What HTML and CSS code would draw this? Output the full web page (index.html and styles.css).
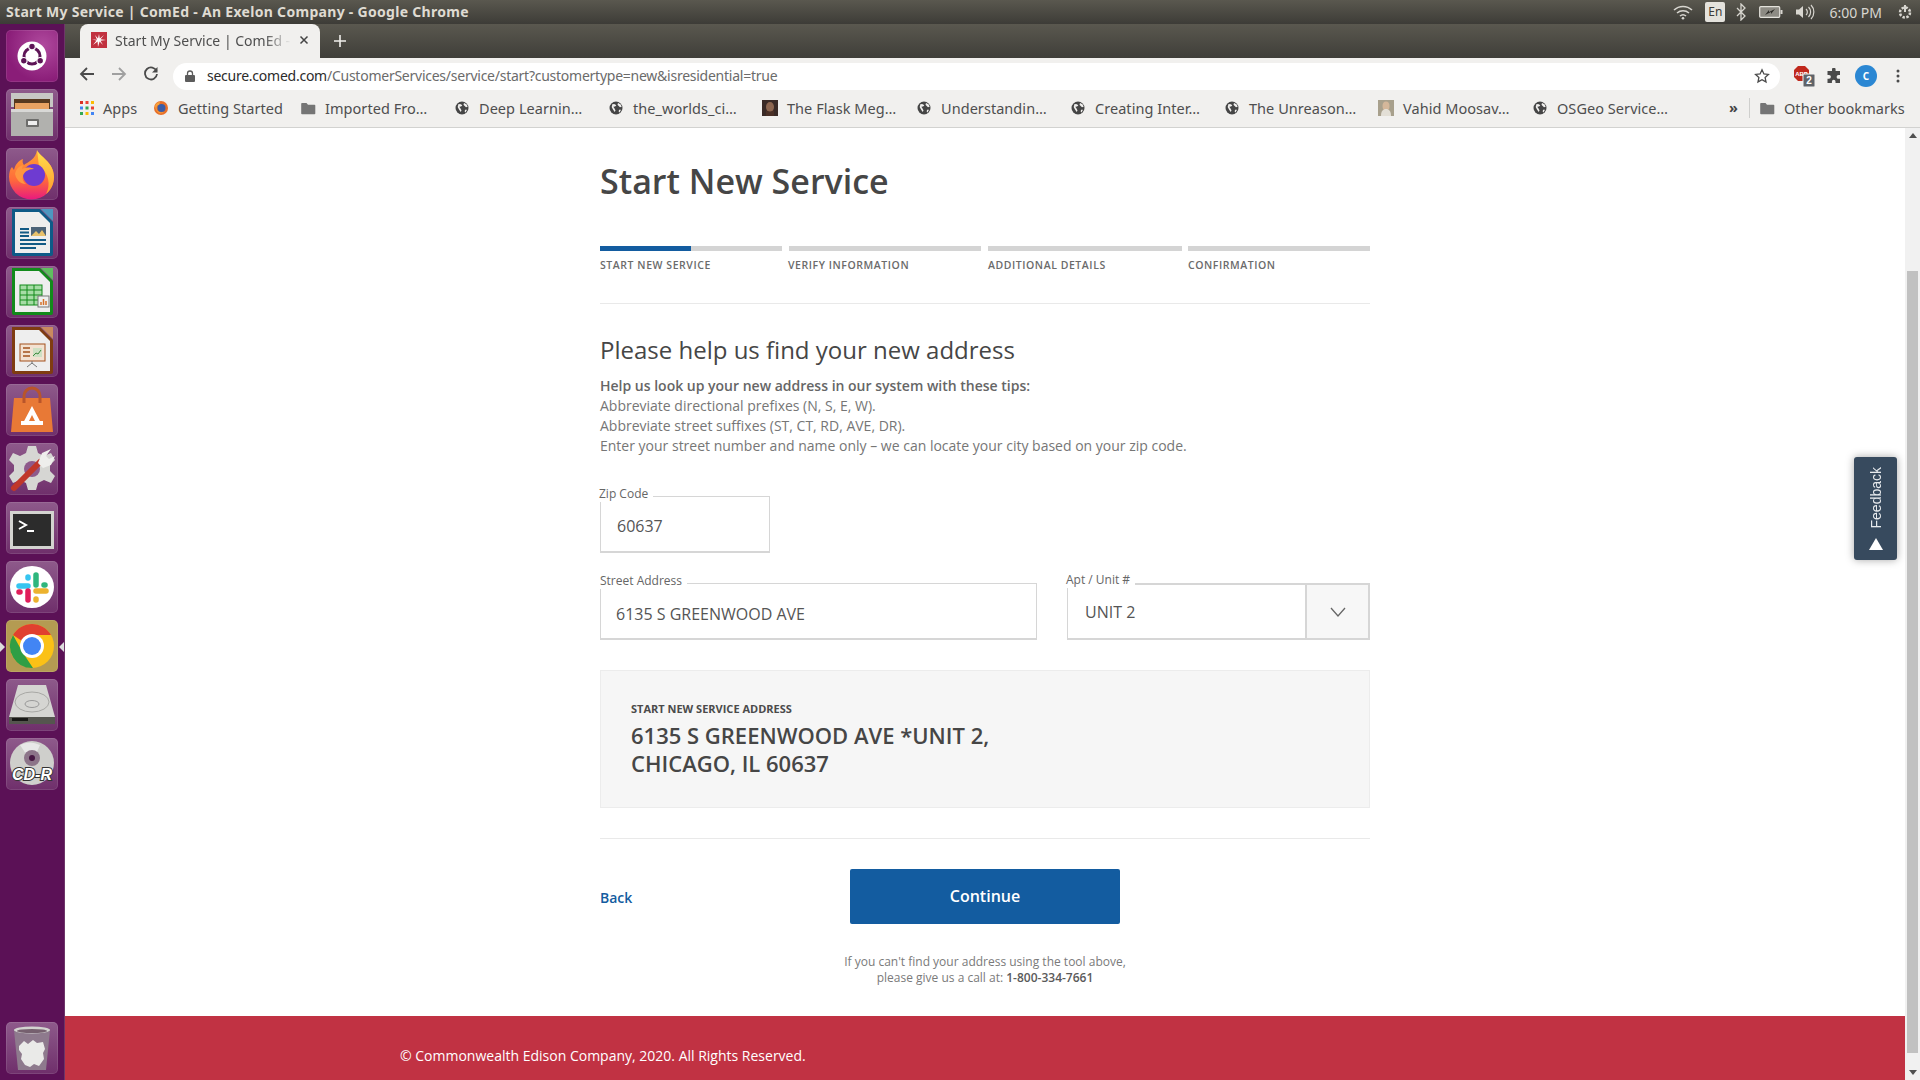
FILE: index.html
```html
<!doctype html>
<html>
<head>
<meta charset="utf-8">
<title>Start My Service | ComEd - An Exelon Company</title>
<link rel="stylesheet" href="styles.css">
</head>
<body>
<svg class="defs" width="0" height="0">
	<defs>
		<linearGradient id="fox" x1="0" y1="0" x2="0" y2="1">
			<stop offset="0" stop-color="#ffa436"/>
			<stop offset=".6" stop-color="#ff6a3a"/>
			<stop offset="1" stop-color="#e8197f"/>
		</linearGradient>
		<linearGradient id="foxtop" x1="0" y1="0" x2="0" y2="1">
			<stop offset="0" stop-color="#ffe14d"/>
			<stop offset="1" stop-color="#ff9a2e"/>
		</linearGradient>
	</defs>
	<symbol id="globe" viewBox="0 0 16 16">
		<circle cx="8" cy="8" r="6.500" fill="#454545"/>
		<path d="M4.500 4l2.500.3 1.300 1.200-1.300.9-1.700.4 1.200 1.600 1 2-.8 1.600-1.700-2.500-1.300-2.500zM10 3l2.500 1.300 1.200 2.500-1.700.4-1.300-1.200-1.200-1.300zM11 9.800h2l-1.500 2.700-.8-.8z" fill="#f1f0ee"/>
	</symbol>
	<symbol id="folder" viewBox="0 0 16 16">
		<path d="M1.500 3h5l1.500 1.700h6.500a.8.800 0 0 1 .8.800v8a.8.800 0 0 1-.8.800h-12.500a.8.800 0 0 1-.8-.8v-9.700a.8.800 0 0 1 .8-.8z" fill="#757575"/>
	</symbol>
</svg>

<div class="topbar">
	<div class="topbar-title">Start My Service | ComEd - An Exelon Company - Google Chrome</div>
	<div class="tray">
		<svg width="20" height="16" viewBox="0 0 20 16"><path d="M1 6a13 13 0 0 1 18 0M4 9a9 9 0 0 1 12 0M7 12a4.500 4.500 0 0 1 6 0" fill="none" stroke="#d8d6d0" stroke-width="1.500"/><circle cx="10" cy="14.200" r="1.300" fill="#d8d6d0"/></svg>
		<span class="tray-lang">En</span>
		<svg class="tray-bt" width="10" height="18" viewBox="0 0 10 18"><path d="M1 5l8 8-4 4V1l4 4-8 8" fill="none" stroke="#d8d6d0" stroke-width="1.300"/></svg>
		<svg class="tray-batt" width="24" height="14" viewBox="0 0 24 14"><rect x=".7" y="1.700" width="20" height="10.600" rx="1" fill="#8d8b84" stroke="#e4e2dc" stroke-width="1.200"/><rect x="21.500" y="5" width="2" height="4" fill="#d8d6d0"/><path d="M6 10l6-3v2l4-5-6 3V5z" fill="#2f2e2a"/></svg>
		<svg class="tray-vol" width="20" height="16" viewBox="0 0 20 16"><path d="M1 5.500h3l4-3.500v12l-4-3.500H1z" fill="#d8d6d0"/><path d="M11 5a4 4 0 0 1 0 6M13.500 3a7 7 0 0 1 0 10M16 1a10 10 0 0 1 0 14" fill="none" stroke="#d8d6d0" stroke-width="1.200"/></svg>
		<span class="tray-clock">6:00 PM</span>
		<svg width="18" height="18" viewBox="0 0 18 18"><g fill="none" stroke="#d8d6d0"><circle cx="9" cy="9.500" r="5" stroke-width="2.500" stroke-dasharray="2.400 1.500"/><path d="M9 2v7" stroke-width="2"/></g></svg>
	</div>
</div>

<div class="desktop">
	<nav class="launcher">
		<div class="tile tile-bfb">
			<svg viewBox="0 0 52 52"><circle cx="26" cy="26" r="14.500" fill="#fff"/><circle cx="26" cy="26" r="8" fill="none" stroke="#5e1557" stroke-width="3"/><g fill="#5e1557" stroke="#fff" stroke-width="1.200"><circle cx="26" cy="16.500" r="3.300"/><circle cx="17.800" cy="30.800" r="3.300"/><circle cx="34.200" cy="30.800" r="3.300"/></g></svg>
		</div>
		<div class="tile">
			<svg viewBox="0 0 52 52"><path d="M5 4h42v14H5z" fill="#c7c7c4"/><path d="M8 10h36v12H8z" fill="#57391f"/><path d="M9 14h34v8H9z" fill="#e8a262"/><path d="M5 20h42v27H5z" fill="#b1b1ae"/><path d="M5 20h42v3H5z" fill="#d8d8d6"/><rect x="20" y="30" width="13" height="8" rx="1" fill="#6d6d6b"/><rect x="22" y="32" width="9" height="4" fill="#eee"/></svg>
		</div>
		<div class="tile">
			<svg viewBox="0 0 52 52"><path d="M31 2c2 6 17 12 17 27a22 22 0 0 1-45 0c0-4 1-8 3-10l2 3c1-5 4-9 9-11-1 3 0 5 1 6 4-3 12-6 13-15z" fill="url(#fox)"/><path d="M31 2c2 6 17 12 17 27 0 7-3 13-8 17 5-9 3-21-7-28-1-5-1-11-2-16z" fill="url(#foxtop)"/><circle cx="28" cy="27" r="11" fill="#6e3bd1"/><path d="M9 26c1-5 4-8 8-9l-1 4c4-2 9-2 12 0-6 0-10 3-11 7-1 3 0 6 3 8-6 0-10-5-11-10z" fill="#ff9640"/></svg>
		</div>
		<div class="tile">
			<svg viewBox="0 0 52 52"><path d="M6 2h28l13 13v32a2 2 0 0 1-2 2H8a2 2 0 0 1-2-2z" fill="#0e5a87"/><path d="M9 5h24l11 11v30H9z" fill="#eee"/><path d="M35 2h12v12z" fill="#4d97c0"/><rect x="25" y="20" width="15" height="9" fill="#4c6378"/><path d="M25 29l5-5 3 3 3-4 4 6z" fill="#e8c16b"/><path d="M14 22h9M14 25.500h9M14 29h9M14 33h26M14 37h26M14 41h16" stroke="#125a85" stroke-width="2"/></svg>
		</div>
		<div class="tile">
			<svg viewBox="0 0 52 52"><path d="M6 2h28l13 13v32a2 2 0 0 1-2 2H8a2 2 0 0 1-2-2z" fill="#128a1b"/><path d="M9 5h24l11 11v30H9z" fill="#eee"/><path d="M35 2h12v12z" fill="#5fbf5f"/><rect x="14" y="19" width="22" height="20" fill="#a6dca6" stroke="#128a1b"/><path d="M14 24h22M14 29h22M14 34h22M21 19v20M28 19v20" stroke="#128a1b"/><rect x="32" y="30" width="11" height="11" fill="#eee" stroke="#777"/><path d="M35 39v-3M37.500 39v-6M40 39v-4" stroke="#d5712b" stroke-width="1.500"/></svg>
		</div>
		<div class="tile">
			<svg viewBox="0 0 52 52"><path d="M6 2h28l13 13v32a2 2 0 0 1-2 2H8a2 2 0 0 1-2-2z" fill="#7f3c12"/><path d="M9 5h24l11 11v30H9z" fill="#eee"/><path d="M35 2h12v12z" fill="#c98a5f"/><rect x="14" y="19" width="25" height="17" fill="#f3e2d2" stroke="#a3511d"/><path d="M17 23h7M17 27h7M17 31h7" stroke="#a3511d" stroke-width="1.500"/><rect x="27" y="23" width="9" height="9" fill="#cfe0c4"/><path d="M27 31l3-3 2 1 3-4" stroke="#3d8a3d" fill="none"/><path d="M26 36v3M26 38l-5 4M26 38l5 4" stroke="#777"/></svg>
		</div>
		<div class="tile">
			<svg viewBox="0 0 52 52"><path d="M8 14h36l3 34H5z" fill="#e87936"/><path d="M18 19v-7a8 8 0 0 1 16 0v7" fill="none" stroke="#b9552a" stroke-width="3"/><path d="M26 22l10 19h-5l-5-10-5 10h-5z" fill="#fff"/><rect x="15" y="37" width="22" height="4" fill="#fff"/></svg>
		</div>
		<div class="tile">
			<svg viewBox="0 0 52 52"><path d="M22 3h8l2 7 6 3 7-3 4 7-5 5v6l5 5-4 7-7-3-6 3-2 7h-8l-2-7-6-3-7 3-4-7 5-5v-6l-5-5 4-7 7 3 6-3z" fill="#d6d6d3"/><circle cx="26" cy="26" r="8" fill="#8e5a8b"/><path d="M8 45l26-26" stroke="#c0372a" stroke-width="6" stroke-linecap="round"/><path d="M32 20l4-10 9-4-5 7 3 3 6-3-4 9-8 3z" fill="#eeeeec"/></svg>
		</div>
		<div class="tile">
			<svg viewBox="0 0 52 52"><rect x="4" y="9" width="44" height="38" fill="#d3d3d0"/><rect x="7" y="12" width="38" height="32" fill="#2c2c2c"/><path d="M13 19l7 4-7 4" fill="none" stroke="#fff" stroke-width="2"/><path d="M21 29h7" stroke="#fff" stroke-width="2"/></svg>
		</div>
		<div class="tile">
			<svg viewBox="0 0 52 52"><ellipse cx="26" cy="26" rx="22" ry="21" fill="#fff"/><g stroke-width="5.500" stroke-linecap="round"><path d="M13 25h9" stroke="#36c5f0"/><path d="M22 16v1" stroke="#36c5f0"/><path d="M30 14v10" stroke="#2eb67d"/><path d="M38 24h1" stroke="#2eb67d"/><path d="M30 30h10" stroke="#ecb22e"/><path d="M30 38v1" stroke="#ecb22e"/><path d="M22 30v9" stroke="#e01e5a"/><path d="M13 31h1" stroke="#e01e5a"/></g></svg>
		</div>
		<div class="tile tile-active">
			<svg viewBox="0 0 52 52"><circle cx="26" cy="26" r="22" fill="#fbc116"/><path d="M7 15a22 22 0 0 1 38 0H26a11 11 0 0 0-10 6z" fill="#e0402f"/><path d="M7 15l10 18 10 15A22 22 0 0 1 7 15z" fill="#2f9e45"/><circle cx="26" cy="26" r="12" fill="#fff"/><circle cx="26" cy="26" r="9" fill="#4285f4"/></svg>
			<i class="pip pip-left"></i><i class="pip pip-right"></i>
		</div>
		<div class="tile">
			<svg viewBox="0 0 52 52"><path d="M12 6h28l9 32v7H3v-7z" fill="#d5d5d2"/><ellipse cx="26" cy="23" rx="17" ry="10" fill="none" stroke="#a8a8a5"/><ellipse cx="26" cy="25" rx="7" ry="3.500" fill="none" stroke="#999"/><rect x="3" y="38" width="46" height="7" fill="#55554f"/><rect x="6" y="39" width="16" height="3" fill="#181816"/></svg>
		</div>
		<div class="tile">
			<svg viewBox="0 0 52 52"><circle cx="26" cy="25" r="22" fill="#cfcfcc"/><path d="M26 25L14 7a22 22 0 0 1 20 0z" fill="#e8e8e8"/><circle cx="26" cy="20" r="8" fill="#8c7489"/><circle cx="26" cy="20" r="3" fill="#471843"/><text class="cd-label" x="26" y="42" text-anchor="middle">CD-R</text></svg>
		</div>
		<div class="tile tile-trash">
			<svg viewBox="0 0 52 52"><path d="M8 8h36l-4 40H12z" fill="#8e7a8d"/><ellipse cx="26" cy="8" rx="18" ry="3.500" fill="#d3d3d0"/><ellipse cx="26" cy="9" rx="15" ry="2" fill="#76606f"/><path d="M13 24l5-5 4 3 5-4 4 3 6-1 2 7-2 4 1 6-5 7-5-2-4 3-5-2-4-6 1-5-3-4z" fill="#eaeae8"/></svg>
		</div>
	</nav>

	<div class="chrome">
		<div class="tabstrip">
			<div class="tab">
				<svg class="favicon" width="16" height="16" viewBox="0 0 16 16"><rect width="16" height="16" fill="#c1313f"/><path d="M8 2l.8 4.500L13 3l-3.500 4.300L15 8l-5.500.8L12 13 8.600 9.500 7 15l-.4-5.500L2 13l3.500-4.500L1 7.500l5 .2L4 3l3 3.500z" fill="#fff"/></svg>
				<span class="tab-title">Start My Service | ComEd - An Exelon Company</span>
				<svg width="10" height="10" viewBox="0 0 10 10"><path d="M1.500 1.500l7 7M8.500 1.500l-7 7" stroke="#444" stroke-width="1.500"/></svg>
			</div>
			<svg class="new-tab" width="14" height="14" viewBox="0 0 14 14"><path d="M7 1v12M1 7h12" stroke="#f0efeb" stroke-width="1.600"/></svg>
		</div>

		<div class="toolbar">
			<svg class="nav-icon" width="16" height="16" viewBox="0 0 16 16"><path d="M15 8H2M8 2L2 8l6 6" fill="none" stroke="#4a4a4a" stroke-width="1.800"/></svg>
			<svg class="nav-icon" width="16" height="16" viewBox="0 0 16 16"><path d="M1 8h13M8 2l6 6-6 6" fill="none" stroke="#a0a0a0" stroke-width="1.800"/></svg>
			<svg class="nav-icon" width="16" height="16" viewBox="0 0 16 16"><path d="M13.600 5.200A6 6 0 1 0 14 8" fill="none" stroke="#4a4a4a" stroke-width="1.800"/><path d="M14.500 1v5.500H9z" fill="#4a4a4a"/></svg>
			<div class="omnibox">
				<svg width="10" height="12" viewBox="0 0 10 12"><rect y="5" width="10" height="7" rx="1" fill="#5c5c5c"/><path d="M2.500 5V3.500a2.500 2.500 0 0 1 5 0V5" fill="none" stroke="#5c5c5c" stroke-width="1.300"/></svg>
				<span class="url"><b>secure.comed.com</b>/CustomerServices/service/start?customertype=new&amp;isresidential=true</span>
				<svg class="star" width="16" height="16" viewBox="0 0 16 16"><path d="M8 1.800l1.900 4.100 4.500.5-3.300 3 .9 4.500L8 11.700l-4 2.200.9-4.500-3.300-3 4.500-.5z" fill="none" stroke="#4a4a4a" stroke-width="1.300"/></svg>
			</div>
			<div class="ext">
				<svg width="24" height="24" viewBox="0 0 24 24"><path d="M6 2h7l4 4v7l-4 4H6l-4-4V6z" fill="#c0281c"/><text class="abp-label" x="9.500" y="12" text-anchor="middle">ABP</text><rect x="11" y="10" width="12" height="13" rx="1" fill="#5f6368" stroke="#f1f0ee"/><text class="abp-count" x="17" y="20" text-anchor="middle">2</text></svg>
				<svg width="16" height="16" viewBox="0 0 16 16"><path d="M6 1.500a1.800 1.800 0 0 1 3.600 0V3H14v4h-1.500a1.900 1.900 0 0 0 0 3.800H14V15H9.500v-1.500a1.800 1.800 0 0 0-3.600 0V15H1.500v-4.300H3a1.900 1.900 0 0 0 0-3.800H1.500V3H6z" fill="#4a4a4a"/></svg>
				<span class="avatar">C</span>
				<svg width="4" height="14" viewBox="0 0 4 14"><circle cx="2" cy="2" r="1.500" fill="#4a4a4a"/><circle cx="2" cy="7" r="1.500" fill="#4a4a4a"/><circle cx="2" cy="12" r="1.500" fill="#4a4a4a"/></svg>
			</div>
		</div>

		<div class="bookmarks">
			<div class="bm bm-apps">
				<svg width="14" height="14" viewBox="0 0 14 14"><g fill="#d93025"><rect width="3" height="3"/><rect x="5.500" width="3" height="3" fill="#ea4335"/></g><rect x="11" width="3" height="3" fill="#fbbc04"/><rect y="5.500" width="3" height="3" fill="#4285f4"/><rect x="5.500" y="5.500" width="3" height="3" fill="#34a853"/><rect x="11" y="5.500" width="3" height="3" fill="#ea4335"/><rect y="11" width="3" height="3" fill="#34a853"/><rect x="5.500" y="11" width="3" height="3" fill="#fbbc04"/><rect x="11" y="11" width="3" height="3" fill="#4285f4"/></svg>
				<span>Apps</span>
			</div>
			<div class="bm bm-first">
				<svg width="16" height="16" viewBox="0 0 16 16"><circle cx="8" cy="8" r="7" fill="#e8702a"/><circle cx="8.500" cy="8" r="4" fill="#3b5da8"/><path d="M2 6c1-3 3-4 5-4l-1 3c-2 0-3 2-2 5 1 2 4 3 7 2-3 3-8 1-9-6z" fill="#f7a23b"/></svg>
				<span>Getting Started</span>
			</div>
			<div class="bm"><svg width="16" height="16"><use href="#folder"/></svg><span>Imported Fro…</span></div>
			<div class="bm"><svg width="16" height="16"><use href="#globe"/></svg><span>Deep Learnin…</span></div>
			<div class="bm"><svg width="16" height="16"><use href="#globe"/></svg><span>the_worlds_ci…</span></div>
			<div class="bm">
				<svg width="16" height="16" viewBox="0 0 16 16"><rect width="16" height="16" fill="#3a2a26"/><ellipse cx="8" cy="7" rx="4" ry="5" fill="#8d6650"/><path d="M4 10c2 2 6 2 8 0v6H4z" fill="#4b3026"/></svg>
				<span>The Flask Meg…</span>
			</div>
			<div class="bm"><svg width="16" height="16"><use href="#globe"/></svg><span>Understandin…</span></div>
			<div class="bm"><svg width="16" height="16"><use href="#globe"/></svg><span>Creating Inter…</span></div>
			<div class="bm"><svg width="16" height="16"><use href="#globe"/></svg><span>The Unreason…</span></div>
			<div class="bm">
				<svg width="16" height="16" viewBox="0 0 16 16"><rect width="16" height="16" fill="#a8a08c"/><ellipse cx="8" cy="6" rx="3.500" ry="4.500" fill="#d4b79a"/><path d="M3 16c0-5 2-7 5-7s5 2 5 7z" fill="#e3dfd6"/></svg>
				<span>Vahid Moosav…</span>
			</div>
			<div class="bm bm-last"><svg width="16" height="16"><use href="#globe"/></svg><span>OSGeo Service…</span></div>
			<div class="bm-more">»</div>
			<div class="bm bm-other"><svg width="16" height="16"><use href="#folder"/></svg><span>Other bookmarks</span></div>
		</div>

		<div class="viewport">
			<div class="page">
				<main class="form-col">
					<h1>Start New Service</h1>
					<ol class="steps">
						<li class="step step-a current"><i class="bar"><i class="bar-fill"></i></i>START NEW SERVICE</li>
						<li class="step step-b"><i class="bar"></i>VERIFY INFORMATION</li>
						<li class="step step-c"><i class="bar"></i>ADDITIONAL DETAILS</li>
						<li class="step step-d"><i class="bar"></i>CONFIRMATION</li>
					</ol>
					<hr class="rule rule-steps">
					<h2>Please help us find your new address</h2>
					<div class="tips">
						<p><strong>Help us look up your new address in our system with these tips:</strong></p>
						<p>Abbreviate directional prefixes (N, S, E, W).</p>
						<p>Abbreviate street suffixes (ST, CT, RD, AVE, DR).</p>
						<p>Enter your street number and name only – we can locate your city based on your zip code.</p>
					</div>
					<div class="field field-zip">
						<label>Zip Code</label>
						<div class="box">60637</div>
					</div>
					<div class="field-row">
						<div class="field field-street">
							<label>Street Address</label>
							<div class="box">6135 S GREENWOOD AVE</div>
						</div>
						<div class="field field-unit">
							<label>Apt / Unit #</label>
							<div class="box">
								<span class="unit-value">UNIT 2</span>
								<span class="unit-caret"><svg width="16" height="10" viewBox="0 0 16 10"><path d="M1 1l7 8 7-8" fill="none" stroke="#666" stroke-width="1.300"/></svg></span>
							</div>
						</div>
					</div>
					<section class="summary">
						<h3>START NEW SERVICE ADDRESS</h3>
						<p>6135 S GREENWOOD AVE *UNIT 2,<br>CHICAGO, IL 60637</p>
					</section>
					<hr class="rule rule-actions">
					<div class="actions">
						<a class="back">Back</a>
						<button class="continue">Continue</button>
					</div>
					<p class="call">If you can't find your address using the tool above,<br>please give us a call at: <b>1-800-334-7661</b></p>
				</main>
				<footer class="footer">© Commonwealth Edison Company, 2020. All Rights Reserved.</footer>
				<button class="feedback"><span>Feedback</span><i class="feedback-arrow"></i></button>
			</div>
			<div class="scrollbar">
				<i class="scroll-up"></i>
				<i class="scroll-track"><i class="scroll-thumb"></i></i>
				<i class="scroll-down"></i>
			</div>
		</div>
	</div>
</div>
</body>
</html>
```

FILE: styles.css
```css
*{box-sizing:border-box;}
html,body{margin:0;height:100%;overflow:hidden;}
body{width:1920px;height:1080px;display:flex;flex-direction:column;font-family:"Open Sans","Noto Sans",sans-serif;color:#4a4a4a;background:#fff;}
.defs{position:absolute;}

/* ubuntu top panel */
.topbar{height:24px;flex:none;display:flex;align-items:center;justify-content:space-between;padding:0 6px 2px;background:linear-gradient(#5a584f,#3d3c37);color:#dfdbd2;}
.topbar-title{font:bold 14px "Noto Sans",sans-serif;letter-spacing:.3px;white-space:nowrap;}
.tray{display:flex;align-items:center;gap:11px;margin-top:2px;}
.tray-lang{width:20px;height:20px;margin:0 -1px 0 1px;background:#e4e2dc;color:#3c3b37;border-radius:2px;font:12px/20px "Noto Sans",sans-serif;text-align:center;}
.tray-bt{margin-left:1px;}
.tray-batt{margin-left:2px;}
.tray-vol{margin-left:1px;}
.tray-clock{font:14px "Noto Sans",sans-serif;margin:0 3px 0 3px;color:#d8d6d0;}

.desktop{flex:1;display:flex;min-height:0;}

/* launcher */
.launcher{width:65px;flex:none;display:flex;flex-direction:column;align-items:center;gap:7px;padding:6px 1px 6px 0;background:#5b1156;border-right:1px solid #6e3569;}
.tile{position:relative;width:52px;height:52px;flex:none;border-radius:5px;background:linear-gradient(#8e5a8b,#6f2f6b);box-shadow:inset 0 0 0 1px rgba(255,255,255,.1);}
.tile svg{display:block;width:52px;height:52px;border-radius:5px;}
.tile-bfb{background:radial-gradient(circle at 70% 30%,#b04a9e,#8a1d78 70%);}
.tile-active{background:#b49b52;}
.tile-trash{margin-top:auto;}
.pip{position:absolute;top:22px;width:0;height:0;border-top:5px solid transparent;border-bottom:5px solid transparent;}
.pip-left{left:-6px;border-left:5px solid #ddd;}
.pip-right{right:-6px;border-right:5px solid #ddd;}
.cd-label{font:italic bold 16px "Liberation Sans",sans-serif;fill:#fff;stroke:#333;stroke-width:2px;paint-order:stroke;}

/* chrome */
.chrome{flex:1;min-width:0;display:flex;flex-direction:column;}
.tabstrip{height:34px;flex:none;display:flex;align-items:flex-end;padding-left:15px;background:linear-gradient(#5a584f,#3f3e39);}
.tab{width:240px;height:34px;display:flex;align-items:center;gap:8px;padding:0 11px 2px;background:#f1f0ee;border-radius:8px 8px 0 0;font:14px "Noto Sans",sans-serif;color:#4f4f4f;}
.tab-title{flex:1;overflow:hidden;white-space:nowrap;-webkit-mask-image:linear-gradient(to right,#000 85%,transparent);mask-image:linear-gradient(to right,#000 85%,transparent);}
.new-tab{margin:0 0 10px 13px;}
.toolbar{height:32px;flex:none;display:flex;align-items:center;gap:16px;padding-left:14px;background:#f1f0ee;}
.nav-icon{flex:none;}
.omnibox{width:1607px;height:27px;margin:4px 0 0 -2px;display:flex;align-items:center;padding:0 10px 1px 12px;gap:12px;background:#fff;border-radius:14px;font:14px "Noto Sans",sans-serif;color:#6b6b6b;}
.url{flex:1;white-space:nowrap;letter-spacing:-.25px;}
.url b{font-weight:400;color:#2b2b2b;}
.ext{display:flex;align-items:center;gap:10px;margin:4px 0 0 -4px;}
.avatar{width:22px;height:22px;margin:0 9px 0 3px;border-radius:50%;background:#2b87d3;color:#fff;font:bold 10px/22px "Noto Sans",sans-serif;text-align:center;}
.abp-label{font:bold 6px "Liberation Sans",sans-serif;fill:#fff;}
.abp-count{font:bold 10px "Liberation Sans",sans-serif;fill:#fff;}
.bookmarks{height:38px;flex:none;display:flex;align-items:center;padding:0 0 1px 15px;background:#f1f0ee;border-bottom:1px solid #d2d2d0;font:14.500px "Noto Sans",sans-serif;letter-spacing:.05px;color:#4e4e4e;}
.bm{width:154px;flex:none;display:flex;align-items:center;gap:9px;white-space:nowrap;}
.bm-apps{width:73px;}
.bm-first{width:147px;}
.bm-last{width:197px;}
.bm-more{width:21px;flex:none;color:#444;border-right:1px solid #cfcfcd;height:20px;line-height:18px;font-weight:700;}
.bm-other{width:auto;margin-left:9px;}

.viewport{flex:1;min-height:0;display:flex;}
.page{position:relative;flex:1;min-width:0;display:flex;flex-direction:column;background:#fff;}
.form-col{width:770px;margin:0 auto;flex:1;}

h1{margin:26px 0 0;font-size:34px;line-height:54px;font-weight:600;color:#464646;}
.steps{list-style:none;margin:38px 0 0;padding:0;display:flex;font-size:10.500px;font-weight:600;letter-spacing:.56px;color:#6b6b6b;}
.step{flex:none;line-height:14px;}
.step-a{width:188px;}
.step-b{width:200px;}
.step-c{width:200px;}
.step-d{width:182px;}
.bar{display:block;height:5px;margin-bottom:7px;background:#d4d4d4;}
.step-a .bar{width:182px;}
.step-b .bar{width:192px;margin-left:1px;}
.step-c .bar{width:194px;}
.step-d .bar{width:182px;}
.bar-fill{display:block;width:91px;height:5px;background:#135ca0;}
.rule{height:1px;margin:0;border:0;background:#e9e9e9;}
.rule-steps{margin-top:31px;}
h2{margin:29px 0 0;font-size:24px;line-height:33px;font-weight:400;color:#464646;}
.tips{margin-top:10px;font-size:14px;line-height:20px;color:#767676;}
.tips p{margin:0;}
.tips strong{font-weight:600;color:#666;}

.field{position:relative;}
.field label{position:absolute;left:0;top:-10px;padding-right:5px;background:#fff;font-size:12px;line-height:16px;color:#666;}
.box{height:57px;border:1px solid #d6d6d6;border-bottom-width:2px;font-size:16px;color:#555;display:flex;align-items:center;padding:3px 0 0 16px;}
.field-zip{width:170px;margin-top:40px;}
.field-zip label{left:-1px;}
.field-row{display:flex;justify-content:space-between;margin-top:30px;}
.field-street{width:437px;}
.field-street .box{padding:6px 0 0 15px;}
.field-unit{width:303px;}
.field-unit label{top:-11px;left:-1px;}
.field-unit .box{padding:0;border-top-width:2px;border-right-width:2px;}
.unit-value{flex:1;padding-left:17px;}
.unit-caret{width:63px;height:100%;display:flex;align-items:center;justify-content:center;border-left:2px solid #d6d6d6;background:#f7f7f7;}

.summary{margin-top:30px;height:138px;padding:30px 30px 0;background:#f6f6f6;border:1px solid #ececec;}
.summary h3{margin:0;font-size:11px;line-height:16px;font-weight:700;color:#4b4b4b;}
.summary p{margin:4px 0 0;font-size:22px;line-height:28px;font-weight:600;color:#464646;}
.rule-actions{margin-top:30px;}
.actions{position:relative;display:flex;justify-content:center;margin-top:30px;}
.back{position:absolute;left:0;top:19px;font-size:14px;line-height:20px;font-weight:600;color:#135ca0;}
.continue{width:270px;height:55px;padding:0 0 2px;border:0;border-radius:2px;background:#135ca0;color:#fff;font:600 16px "Open Sans",sans-serif;}
.call{margin:30px 0 0;text-align:center;font-size:12px;line-height:16px;color:#7a7a7a;}
.call b{font-weight:600;color:#5a5a5a;}

.footer{height:64px;flex:none;padding:30px 0 0 335px;background:#c13243;color:#fff;font-size:14px;line-height:20px;}

.feedback{position:absolute;right:8px;top:329px;width:43px;height:103px;padding:0;border:0;border-radius:3px;background:#374a5e;box-shadow:0 0 8px rgba(0,0,0,.35);display:flex;flex-direction:column;align-items:center;justify-content:center;gap:9px;color:#e8ebee;font:14px "Liberation Sans",sans-serif;}
.feedback span{writing-mode:vertical-rl;transform:rotate(180deg);}
.feedback-arrow{width:0;height:0;border-left:7px solid transparent;border-right:7px solid transparent;border-bottom:12px solid #fff;}

.scrollbar{width:15px;flex:none;display:flex;flex-direction:column;align-items:center;background:#f1f1f1;}
.scroll-up,.scroll-down{flex:none;width:0;height:0;margin:5px 0;border-left:4px solid transparent;border-right:4px solid transparent;}
.scroll-up{border-bottom:5px solid #505050;}
.scroll-down{border-top:5px solid #505050;}
.scroll-track{flex:1;width:100%;display:flex;flex-direction:column;justify-content:flex-end;padding:0 2px 12px 2px;}
.scroll-thumb{display:block;height:782px;background:#c1c1c1;}
```
